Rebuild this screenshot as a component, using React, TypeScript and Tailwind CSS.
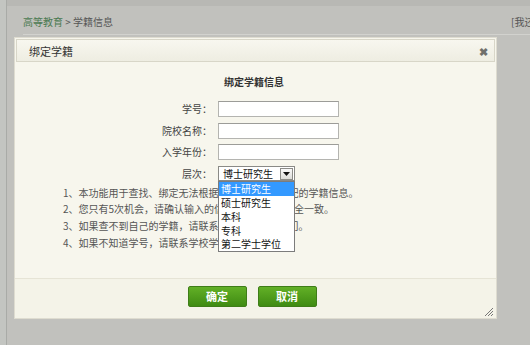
import React from "react";

const font = { fontFamily: '"Noto Sans CJK SC", "Noto Sans", sans-serif' };

function Row({ label, children }: { label: string; children: React.ReactNode }) {
  return (
    <div className="flex h-[16px] items-center">
      <div className="w-[197px] text-right text-[10px] leading-[16px] text-[#444]">{label}</div>
      <div className="ml-[6px]">{children}</div>
    </div>
  );
}

function TextInput() {
  return (
    <div className="h-[16px] w-[121px] border border-[#b4b4b0] border-t-[#9c9c98] bg-white" />
  );
}

export default function App() {
  const options = ["博士研究生", "硕士研究生", "本科", "专科", "第二学士学位"];
  return (
    <div style={font} className="relative flex h-[345px] w-[530px] overflow-hidden bg-[#bfbfbb]">
      {/* left strip */}
      <div className="h-full w-[7px] shrink-0 border-r border-[#a9aba7] bg-[#c3c5c1]" />
      {/* page */}
      <div className="flex min-w-0 flex-1 flex-col">
        <div className="h-[6px] bg-[#b8b8b4]" />
        <div className="flex-1 bg-[#c1c1bd]">
          <div className="ml-[16px] flex h-[29px] items-end border-b border-[#d2d2ce] pb-[6px] text-[10px] leading-[12px]">
            <div className="w-[488px] shrink-0 whitespace-nowrap">
              <span className="text-[#4c7a52]">高等教育</span>
              <span className="text-[#555]"> &gt; 学籍信息</span>
            </div>
            <div className="whitespace-nowrap text-[#555]">[我还没有学籍]</div>
          </div>
        </div>
      </div>

      {/* dialog */}
      <div className="absolute left-[14px] top-[37px] flex h-[282px] w-[483px] flex-col border border-[#dedcd0] bg-[#f7f6ed]">
        <div className="mx-[1px] mt-[1px] flex h-[23px] items-center justify-between border border-[#d8d6c8] bg-gradient-to-b from-[#f8f7ef] to-[#eeede2] pl-[12px] pr-[6px]">
          <span className="text-[11px] leading-[14px] text-[#333]">绑定学籍</span>
          <span className="text-[11px] font-bold leading-[12px] text-[#6f6f6b]">✖</span>
        </div>

        {/* body */}
        <div className="flex-1">
          <div className="pl-[209px] pt-[14px] text-[10px] font-bold leading-[12px] text-[#333]">
            绑定学籍信息
          </div>
          <div className="mt-[13px] flex flex-col gap-[5.6px]">
            <Row label="学号：">
              <TextInput />
            </Row>
            <Row label="院校名称：">
              <TextInput />
            </Row>
            <Row label="入学年份：">
              <TextInput />
            </Row>
            <Row label="层次：">
              <div className="relative flex h-[15px] w-[77px] items-center justify-between border border-[#8a8a86] bg-white pl-[4px] pr-[1px]">
                <span className="text-[10px] leading-[12px] text-[#111]">博士研究生</span>
                <span className="flex h-[12px] w-[13px] items-center justify-center border border-[#8c8c88] bg-gradient-to-b from-[#fafafa] to-[#dcdcd8]">
                  <svg width="7" height="4" viewBox="0 0 7 4">
                    <path d="M0 0 H7 L3.5 4 Z" fill="#111" />
                  </svg>
                </span>
                <div className="absolute left-[-1px] top-[14px] z-10 w-[77px] border border-[#7c7c7c] bg-white">
                  {options.map((o, i) => (
                    <div
                      key={o}
                      className={
                        i === 0
                          ? "h-[13.8px] bg-[#3399ff] pl-[2px] text-[10px] leading-[13.8px] text-white"
                          : "h-[13.8px] pl-[2px] text-[10px] leading-[13.8px] text-[#111]"
                      }
                    >
                      {o}
                    </div>
                  ))}
                </div>
              </div>
            </Row>
          </div>
          <div className="mt-[3px] pl-[48px] text-[10px] leading-[16.6px] text-[#555]">
            <div>1、本功能用于查找、绑定无法根据身份信息自动匹配的学籍信息。</div>
            <div>2、您只有5次机会，请确认输入的信息与学籍信息完全一致。</div>
            <div>3、如果查不到自己的学籍，请联系学校学籍管理部门。</div>
            <div>4、如果不知道学号，请联系学校学籍管理部门。</div>
          </div>
        </div>

        {/* footer */}
        <div className="relative flex h-[40px] justify-center gap-[11px] border-t border-[#e6e4d6] bg-[#f4f3e8] pr-[7px] pt-[7px]">
          <button className="h-[21px] w-[59px] rounded-[2px] border border-[#3f7d18] bg-gradient-to-b from-[#62b026] to-[#3f8b12] text-[11px] font-bold leading-[19px] text-white">
            确定
          </button>
          <button className="h-[21px] w-[59px] rounded-[2px] border border-[#3f7d18] bg-gradient-to-b from-[#62b026] to-[#3f8b12] text-[11px] font-bold leading-[19px] text-white">
            取消
          </button>
          <svg className="absolute bottom-[1px] right-[2px]" width="10" height="10" viewBox="0 0 10 10">
            <path d="M9 1 L1 9 M9 4 L4 9 M9 7 L7 9" stroke="#777" strokeWidth="1" />
          </svg>
        </div>
      </div>
    </div>
  );
}
